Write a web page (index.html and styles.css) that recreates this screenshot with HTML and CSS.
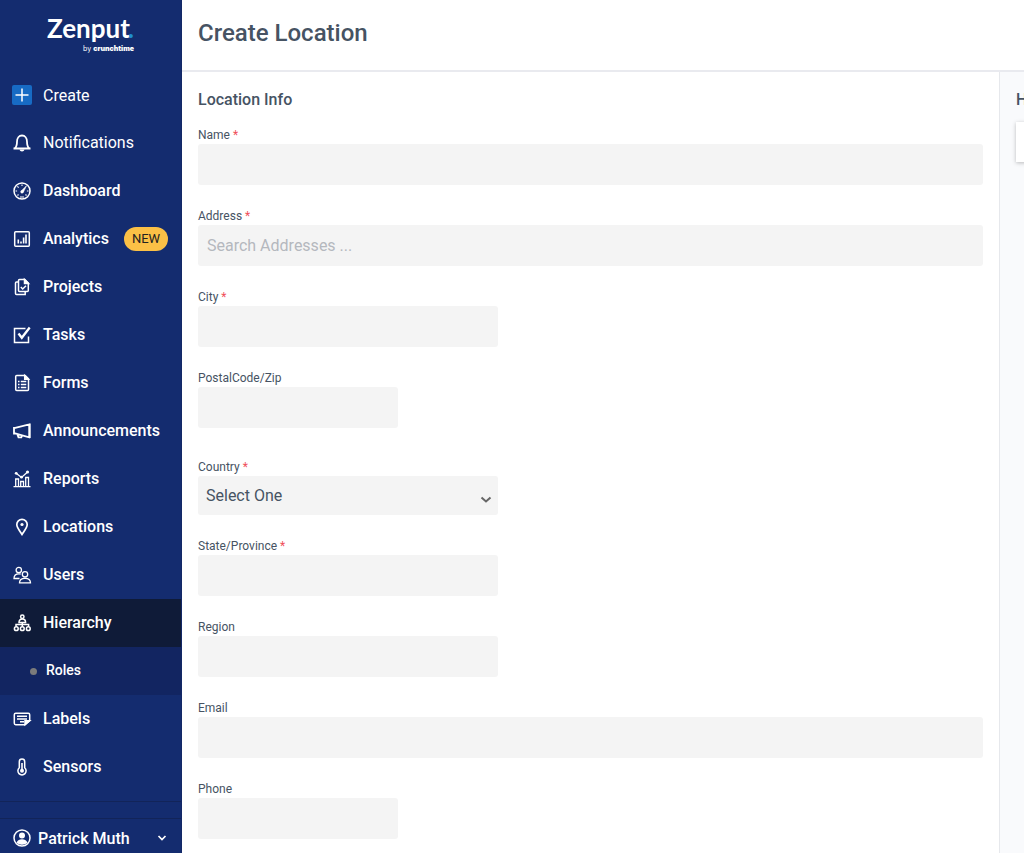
FILE: index.html
```html
<!DOCTYPE html>
<html lang="en">
<head>
  <meta charset="UTF-8">
  <meta name="viewport" content="width=device-width, initial-scale=1.0">
  <title>Create Location</title>
  <link rel="stylesheet" href="styles.css">
</head>
<body>

  <nav class="sidebar">
    <a class="logo" href="#">
      <span class="logo-name">Zenput<span class="logo-dot">.</span></span>
      <span class="logo-by">by <b>crunchtime</b></span>
    </a>

    <button type="button" class="nav-item light create">
      <svg class="icon" viewBox="0 0 20 20"><rect width="20" height="20" rx="2" fill="#176bc4" stroke="none"/><path d="M10 3.5v13M3.5 10h13"/></svg>
      Create
    </button>
    <button type="button" class="nav-item light">
      <svg class="icon" viewBox="0 0 20 20"><path d="M1.500 15.500h17M2.800 15.200c1.900-1.500 2.200-3 2.200-6.500C5 5 7 2.500 10 2.500S15 5 15 8.700c0 3.500.3 5 2.200 6.500" stroke-width="1.800"/><path d="M7.500 16.500h5c-.3 1.300-1.200 1.900-2.500 1.900s-2.200-.6-2.500-1.900z" fill="#fff" stroke="none"/></svg>
      Notifications
    </button>
    <a class="nav-item" href="#">
      <svg class="icon" viewBox="0 0 20 20"><circle cx="10" cy="10" r="8"/><path d="M10 3.500v1.600M3.500 10h1.600M14.900 10h1.600M5.400 5.400l1.200 1.200M5.500 14.500l1-1M14.500 14.500l-1-1M8 16h4" stroke-width="1.100"/><path d="M9 10.200l5.500-5.500-3.200 6.600z" fill="#fff" stroke="#fff" stroke-width=".6"/><circle cx="10" cy="10.800" r="1.600" fill="#fff" stroke="none"/></svg>
      Dashboard
    </a>
    <a class="nav-item" href="#">
      <svg class="icon" viewBox="0 0 20 20"><rect x="2.700" y="2.700" width="14.600" height="14.600" rx="1"/><path d="M6.300 10.500v4M9 12.500v2M11.600 8.500v6M14 5.500v9" stroke-width="1.600"/></svg>
      Analytics <span class="badge">NEW</span>
    </a>
    <a class="nav-item" href="#">
      <svg class="icon" viewBox="0 0 20 20"><path d="M7.500 2.500h5.300l3.500 3.500v7.500c0 .6-.4 1-1 1H7.500c-.6 0-1-.4-1-1v-10c0-.6.4-1 1-1z"/><path d="M12.500 2.500v4h4z" fill="#fff"/><path d="M6 5H4.500c-.6 0-1 .4-1 1v10.500c0 .6.400 1 1 1h8.700v-2.700M8.800 10l1.900 2 3.300-3.300"/></svg>
      Projects
    </a>
    <a class="nav-item" href="#">
      <svg class="icon" viewBox="0 0 20 20"><path d="M13.500 3.500H2.500v14h14v-6"/><path d="M6.500 8.500l3.300 4.300L17.700 2.500" stroke-width="2.300"/></svg>
      Tasks
    </a>
    <a class="nav-item" href="#">
      <svg class="icon" viewBox="0 0 20 20"><path d="M4.700 2.500h8.500l3.300 3.300v10.700c0 .6-.4 1-1 1H4.700c-.6 0-1-.4-1-1v-13c0-.6.4-1 1-1z"/><path d="M12.700 2.500v3.800h3.800z" fill="#fff"/><path d="M6 8.500h1.500M8.800 8.500h5.500M6 11.500h1.500M8.800 11.500h5.500M6 14.500h1.500M8.800 14.500h5.500" stroke-width="1.300"/></svg>
      Forms
    </a>
    <a class="nav-item" href="#">
      <svg class="icon" viewBox="0 0 20 20"><path d="M2 6v7.500M2.200 7.200l15-3.700v12.800L2.200 12.200M17.800 2.500v14.500M5.200 13l1.300 3.300h2.800l.9-2" stroke-width="1.800"/></svg>
      Announcements
    </a>
    <a class="nav-item" href="#">
      <svg class="icon" viewBox="0 0 20 20"><path d="M1.500 17.700h17M3.700 17.500V10h2.800v7.500M8.700 17.500v-5h2.800v5M13.700 17.500V8.500h2.800v9M4.500 4.500l5 4 5.500-5" stroke-width="1.300"/><circle cx="4.200" cy="4.300" r="1.400" fill="#fff" stroke="none"/><circle cx="9.500" cy="8.200" r="1.400" fill="#fff" stroke="none"/><circle cx="15.500" cy="3" r="1.600" fill="#fff" stroke="none"/></svg>
      Reports
    </a>
    <a class="nav-item" href="#">
      <svg class="icon" viewBox="0 0 20 20"><path d="M10 17.500C7.500 13.500 4.800 10.500 4.800 7.500a5.200 5.200 0 0 1 10.400 0c0 3-2.700 6-5.200 10z" stroke-width="1.700"/><circle cx="10" cy="7.500" r="1.600" fill="#fff" stroke="none"/></svg>
      Locations
    </a>
    <a class="nav-item" href="#">
      <svg class="icon" viewBox="0 0 20 20"><g stroke-width="1.300"><circle cx="6.800" cy="5" r="2.700"/><path d="M7.500 13.500H2c0-3.300 1.500-4.700 5-4.700.7 0 1.200.1 1.700.3"/><circle cx="13" cy="9.300" r="2.700"/><path d="M7.500 17.800c0-3.300 1.800-4.500 5.500-4.500s5.500 1.200 5.500 4.500z"/></g></svg>
      Users
    </a>
    <a class="nav-item active" href="#">
      <svg class="icon" viewBox="0 0 20 20"><g stroke-width="1.500"><circle cx="10.300" cy="3.800" r="1.700"/><path d="M7 9.500c0-2.200 1-3.400 3.300-3.400s3.300 1.200 3.300 3.400zM10.300 9.500v4M4 13.500v-2h12.600v2"/><circle cx="4.300" cy="15.700" r="1.900"/><circle cx="10.300" cy="15.700" r="1.900"/><circle cx="16.300" cy="15.700" r="1.900"/></g></svg>
      Hierarchy
    </a>
    <a class="sub-item" href="#">Roles</a>
    <a class="nav-item" href="#">
      <svg class="icon" viewBox="0 0 20 20"><path d="M13 15.700H3.700c-.8 0-1.400-.6-1.400-1.400V5.700c0-.8.6-1.400 1.400-1.400h12.600c.8 0 1.400.6 1.400 1.400v6z"/><path d="M13 15.700v-4h4.700z" fill="#fff"/><path d="M5 7.300h10M5 10h10M8 12.700h4" stroke-width="1.400"/></svg>
      Labels
    </a>
    <a class="nav-item" href="#">
      <svg class="icon" viewBox="0 0 20 20"><path d="M7.300 10.700V4.800a2.700 2.700 0 0 1 5.400 0v5.900a4.100 4.100 0 1 1-5.400 0z"/><circle cx="10" cy="13.700" r="2" fill="#fff" stroke="none"/><path d="M10 6v7" stroke-width="1.600"/></svg>
      Sensors
    </a>

    <div class="sidebar-gap"></div>
    <button type="button" class="user">
      <svg class="icon" viewBox="0 0 20 20"><circle cx="10" cy="10" r="8"/><circle cx="10" cy="7.500" r="3" fill="#fff" stroke="none"/><path d="M4.500 14.700c1.200-2.700 3-3.400 5.500-3.400s4.300.7 5.500 3.400c-1.500 1.300-3.300 2-5.500 2s-4-.7-5.500-2z" fill="#fff" stroke="none"/></svg>
      <span class="user-name">Patrick Muth</span>
      <svg class="caret" viewBox="0 0 10 10"><path d="M1.500 3L5 6.500 8.500 3" stroke-width="1.700"/></svg>
    </button>
  </nav>

  <main class="page">
    <header class="page-header">
      <h1>Create Location</h1>
    </header>

    <div class="content">
      <form class="location-form">
        <h2>Location Info</h2>

        <div class="field">
          <label for="name">Name <span class="required">*</span></label>
          <input type="text" id="name">
        </div>
        <div class="field">
          <label for="address">Address <span class="required">*</span></label>
          <input type="text" id="address" placeholder="Search Addresses ...">
        </div>
        <div class="field medium">
          <label for="city">City <span class="required">*</span></label>
          <input type="text" id="city">
        </div>
        <div class="field small group-end">
          <label for="zip">PostalCode/Zip</label>
          <input type="text" id="zip">
        </div>
        <div class="field medium">
          <label for="country">Country <span class="required">*</span></label>
          <select id="country">
            <option>Select One</option>
          </select>
        </div>
        <div class="field medium">
          <label for="state">State/Province <span class="required">*</span></label>
          <input type="text" id="state">
        </div>
        <div class="field medium">
          <label for="region">Region</label>
          <input type="text" id="region">
        </div>
        <div class="field">
          <label for="email">Email</label>
          <input type="email" id="email">
        </div>
        <div class="field small">
          <label for="phone">Phone</label>
          <input type="tel" id="phone">
        </div>
      </form>

      <aside class="side-panel">
        <h2>Hierarchy</h2>
        <div class="card"></div>
      </aside>
    </div>
  </main>

</body>
</html>
```
FILE: styles.css
```css
* {
  box-sizing: border-box;
}

body {
  margin: 0;
  height: 100vh;
  display: flex;
  overflow: hidden;
  font-family: Roboto, sans-serif;
  font-size: 16px;
  color: #465363;
  background: #fff;
}

button, input, select {
  font: inherit;
  color: inherit;
  border: none;
}

/* sidebar */
.sidebar {
  flex: 0 0 182px;
  display: flex;
  flex-direction: column;
  overflow: hidden;
  border-right: 1px solid #132866;
  background: #142c6f;
  color: #fff;
}

.sidebar a {
  color: #fff;
  text-decoration: none;
}

.sidebar > * {
  flex-shrink: 0;
}

.logo {
  height: 71px;
  padding: 12px 47px 0 0;
  display: flex;
  flex-direction: column;
  align-items: flex-end;
}

.logo-name {
  font-family: Lato, sans-serif;
  font-size: 26px;
  font-weight: 700;
  line-height: 32px;
}

.logo-dot {
  margin-left: -2px;
  color: #1f8fce;
}

.logo-by {
  font-family: Inter, sans-serif;
  font-size: 7px;
  line-height: 9px;
}

.logo-by b {
  font-weight: 900;
}

.nav-item {
  height: 48px;
  padding: 0 12px 2px;
  display: flex;
  align-items: center;
  gap: 11px;
  font-weight: 500;
  text-align: left;
  background: none;
  cursor: pointer;
}

.nav-item .icon, .badge {
  margin-top: 2px;
}

.nav-item.light {
  font-weight: 400;
}

.nav-item.create {
  padding-bottom: 0;
}

.nav-item.create .icon {
  margin-top: 0;
}

.nav-item.active {
  background: #0f1b38;
}

.icon {
  width: 20px;
  height: 20px;
  flex-shrink: 0;
}

.icon, .caret {
  fill: none;
  stroke: #fff;
  stroke-width: 1.5;
}

.badge {
  margin-left: 4px;
  padding: 0 8px;
  border-radius: 12px;
  font-size: 13px;
  font-weight: 400;
  line-height: 24px;
  color: #222;
  background: #fbc046;
}

.sub-item {
  height: 48px;
  padding: 0 0 2px 30px;
  display: flex;
  align-items: center;
  gap: 9px;
  font-size: 14px;
  font-weight: 500;
  background: #122561;
}

.sub-item::before {
  content: "";
  width: 7px;
  height: 7px;
  margin-top: 2px;
  border-radius: 50%;
  background: #7b7b7b;
}

.sidebar-gap {
  height: 18px;
  margin-top: 10px;
  border: 1px solid #122459;
  border-width: 1px 0;
}

.user {
  height: 38px;
  padding: 0 14px 0 12px;
  display: flex;
  align-items: center;
  gap: 6px;
  font-weight: 500;
  background: none;
  cursor: pointer;
}

.user-name {
  flex: 1;
  text-align: left;
}

.caret {
  width: 10px;
  height: 10px;
}

/* page */
.page {
  flex: 1;
  min-width: 0;
  display: flex;
  flex-direction: column;
  overflow: hidden;
}

.page-header {
  flex-shrink: 0;
  padding: 16px 16px 20px;
  border-bottom: 2px solid #e9eaef;
}

h1 {
  margin: 0;
  font-size: 24px;
  font-weight: 500;
  line-height: 34px;
}

h2 {
  margin: 0 0 14px;
  font-size: 16px;
  font-weight: 500;
  line-height: 24px;
}

.content {
  flex: 1;
  min-height: 0;
  display: flex;
}

.location-form {
  flex: 1;
  padding: 16px;
}

.field {
  margin-bottom: 22px;
}

.medium {
  max-width: 300px;
}

.small {
  max-width: 200px;
}

.group-end {
  margin-bottom: 30px;
}

label {
  display: block;
  font-size: 12px;
  line-height: 18px;
}

.required {
  color: #f0505a;
}

input, select {
  display: block;
  width: 100%;
  height: 41px;
  padding: 0 9px;
  border-radius: 3px;
  background-color: #f4f4f4;
}

input::placeholder {
  color: #b4b8be;
}

select {
  height: 39px;
  padding: 0 8px;
  appearance: none;
  background-image: url("data:image/svg+xml,%3Csvg xmlns='http://www.w3.org/2000/svg' width='12' height='8'%3E%3Cpath d='M1.500 1.500L6 5.500l4.500-4' fill='none' stroke='%23666' stroke-width='2'/%3E%3C/svg%3E");
  background-repeat: no-repeat;
  background-position: right 6px bottom 11px;
}

/* runs past the right edge of the window */
.side-panel {
  flex: 0 0 300px;
  margin-right: -275px;
  padding: 16px;
  border-left: 1px solid #e6e8ec;
  background: #f9fafc;
}

.side-panel h2 {
  margin-bottom: 10px;
}

.card {
  height: 40px;
  background: #fff;
  box-shadow: 0 1px 4px rgba(0, 0, 0, 0.25);
}
```
